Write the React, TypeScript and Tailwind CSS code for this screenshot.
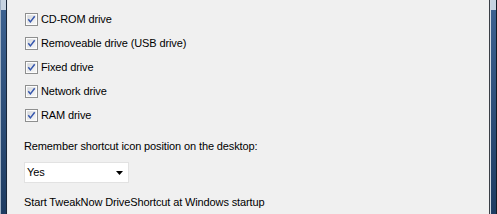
import React from "react";

function Check() {
  return (
    <svg width="13" height="13" viewBox="0 0 13 13" className="shrink-0">
      <defs>
        <linearGradient id="cbg" x1="0" y1="0" x2="1" y2="1">
          <stop offset="0" stopColor="#d3d6da" />
          <stop offset="1" stopColor="#f8f8f8" />
        </linearGradient>
      </defs>
      <rect x="0.5" y="0.5" width="12" height="12" fill="#ffffff" stroke="#8e8f8f" />
      <rect x="2" y="2" width="9" height="9" fill="url(#cbg)" stroke="#f4f4f4" strokeWidth="0.5" />
      <path d="M3.3 6.3 L5.4 8.9 L9.7 3.3" fill="none" stroke="#3455ad" strokeWidth="1.5" />
    </svg>
  );
}

const items = ["CD-ROM drive", "Removeable drive (USB drive)", "Fixed drive", "Network drive", "RAM drive"];

export default function App() {
  return (
    <div
      className="flex h-[214px] w-[497px] bg-[#f0f0f0] overflow-hidden text-[11px] tracking-[-0.12px] text-black"
      style={{ fontFamily: '"Liberation Sans", Arial, sans-serif' }}
    >
      <div className="flex shrink-0 h-full">
        <div className="w-px h-full bg-[#9fb0c4]" />
        <div className="w-[5px] h-full flex flex-col">
          <div className="h-[10px] bg-[#c6d3e1]" />
          <div className="flex-1 bg-gradient-to-b from-[#3c6190] to-[#1e3c62]" />
        </div>
        <div className="w-px h-full bg-[#1a2738]" />
        <div className="w-px h-full bg-[#e8ecf0]" />
      </div>
      <div className="flex-1 flex flex-col pl-[16px] pt-[7px]">
        {items.map((t) => (
          <div key={t} className="flex items-center h-[24px] pl-px">
            <Check />
            <span className="ml-[3px] leading-[13px]">{t}</span>
          </div>
        ))}
        <div className="mt-[12px] leading-[14px]">Remember shortcut icon position on the desktop:</div>
        <div className="mt-[9px] w-[105px] h-[21px] bg-white border border-[#e2e2e2] flex items-center justify-between pl-[2px] pr-[5px]">
          <span className="leading-[13px]">Yes</span>
          <svg width="7" height="4" viewBox="0 0 7 4">
            <path d="M0 0 H7 L3.5 4 Z" fill="#000" />
          </svg>
        </div>
        <div className="mt-[12px] leading-[14px]">Start TweakNow DriveShortcut at Windows startup</div>
      </div>
      <div className="flex shrink-0 h-full">
        <div className="w-px h-full bg-[#3a3f46]" />
        <div className="w-px h-full bg-[#d0d8e2]" />
        <div className="w-[5px] h-full flex flex-col">
          <div className="h-[10px] bg-[#c6d3e1]" />
          <div className="flex-1 bg-gradient-to-b from-[#3c6190] to-[#1e3c62]" />
        </div>
        <div className="w-px h-full bg-[#141c26]" />
      </div>
    </div>
  );
}
